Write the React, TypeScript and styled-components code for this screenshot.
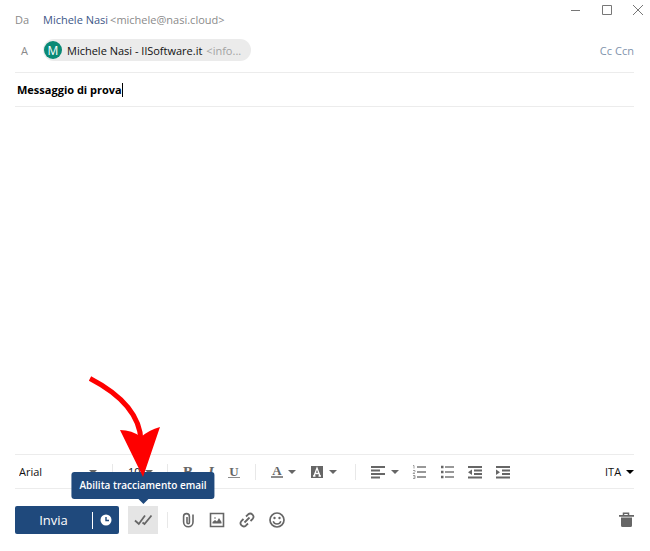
import React, { useState } from "react";
import styled, { createGlobalStyle, css } from "styled-components";

const UI = `"Open Sans", "Noto Sans", sans-serif`;
const NAVY = "#1f497c";
const ICON = "#666666";
const LINE = "#ececec";

const GlobalStyle = createGlobalStyle`
  * { box-sizing: border-box; }
  body { margin: 0; background: #fff; font-family: ${UI}; font-size: 11px; color: #111; }
  button, input, select, textarea { font: inherit; color: inherit; margin: 0; padding: 0; border: 0; background: none; outline: none; }
  button { cursor: pointer; }
  svg { display: block; }
`;

const Window = styled.main`
  display: flex;
  flex-direction: column;
  min-height: 100vh;
  padding: 0 16px 0 15px;
`;

const Header = styled.header`
  display: flex;
  flex-direction: column;
  padding-bottom: 11px;
  border-bottom: 1px solid ${LINE};
`;

const AddressRow = styled.div<{ $tall?: boolean }>`
  display: flex;
  align-items: center;
  height: ${(p) => (p.$tall ? 39 : 22)}px;
`;

const RowLabel = styled.span`
  width: 28px;
  padding-right: 15px;
  text-align: right;
  color: #8a8a8a;
`;

const Sender = styled.span`
  color: #3d5788;
`;

const Address = styled.span`
  margin-left: 2px;
  color: #8a8a8a;
`;

const WindowButtons = styled.div`
  display: flex;
  align-self: flex-start;
  gap: 19px;
  height: 20px;
  margin: 0 -10px 0 auto;
`;

const WindowButton = styled.button`
  display: grid;
  place-items: center;
  width: 12px;
`;

const Chip = styled.span`
  display: flex;
  align-items: center;
  height: 22px;
  padding: 0 10px 0 1px;
  border-radius: 11px;
  background: #ebebeb;
`;

const Avatar = styled.span`
  display: grid;
  place-items: center;
  width: 18px;
  height: 18px;
  margin-right: 5px;
  border-radius: 50%;
  background: #0a8a76;
  color: #fff;
  font-size: 12px;
`;

const ChipAddress = styled.span`
  margin-left: 4px;
  color: #a3a3a3;
`;

const CopyLinks = styled.nav`
  display: flex;
  gap: 3px;
  margin-left: auto;
`;

const CopyLink = styled.a`
  color: #7f93ac;
  text-decoration: none;
`;

const SubjectRow = styled.div`
  display: flex;
  align-items: center;
  height: 34px;
  padding-left: 2px;
  border-bottom: 1px solid ${LINE};
`;

const SubjectInput = styled.input`
  field-sizing: content;
  font-weight: 700;
  color: #000;
  caret-color: transparent;
`;

const TextCursor = styled.span`
  width: 1px;
  height: 14px;
  background: #000;
`;

const Message = styled.textarea`
  flex: 1;
  width: 100%;
  min-height: 120px;
  padding: 12px 2px;
  resize: none;
`;

const FormatBar = styled.div`
  display: flex;
  align-items: center;
  height: 35px;
  padding-left: 4px;
  border-top: 1px solid ${LINE};
  border-bottom: 1px solid ${LINE};
`;

const Divider = styled.span<{ $gap: number }>`
  flex: none;
  width: 1px;
  height: 16px;
  margin: 0 ${(p) => p.$gap}px;
  background: #e8e8e8;
`;

const SelectBox = styled.label<{ $width: number; $end?: boolean }>`
  display: grid;
  align-items: center;
  flex: none;
  width: ${(p) => p.$width}px;
  ${(p) => p.$end && css`margin-left: auto;`}

  > * { grid-area: 1 / 1; }
  > svg { justify-self: end; pointer-events: none; }
`;

const Select = styled.select`
  appearance: none;
  width: 100%;
`;

const ToolGroup = styled.div<{ $gap: number; $padEnd?: number }>`
  display: flex;
  align-items: center;
  gap: ${(p) => p.$gap}px;
  padding-right: ${(p) => p.$padEnd ?? 0}px;
`;

const ToolButton = styled.button`
  display: flex;
  align-items: center;
  justify-content: center;
  gap: 5px;
  height: 20px;
  min-width: 12px;
`;

const Letter = styled.span<{ $italic?: boolean; $rule?: number }>`
  min-width: 12px;
  font-family: "Liberation Serif", "DejaVu Serif", serif;
  font-size: ${(p) => (p.$rule ? 13 : 15)}px;
  line-height: ${(p) => (p.$rule ? 11 : 14)}px;
  text-align: center;
  color: ${ICON};
  font-weight: 700;
  font-style: ${(p) => (p.$italic ? "italic" : "normal")};
  border-bottom: ${(p) => p.$rule ?? 0}px solid #8c8c8c;
`;

const ActionBar = styled.footer`
  display: flex;
  align-items: center;
  padding: 17px 0;
`;

const SendGroup = styled.div`
  display: flex;
  align-items: center;
  height: 28px;
  border-radius: 2px;
  background: ${NAVY};
  color: #fff;
`;

const SendButton = styled.button`
  width: 77px;
  height: 28px;
  font-size: 13px;
`;

const SendDivider = styled.span`
  width: 1px;
  height: 17px;
  background: #fff;
`;

const ScheduleButton = styled.button`
  display: grid;
  place-items: center;
  width: 26px;
  height: 28px;
`;

const TrackAnchor = styled.div`
  position: relative;
  margin-left: 9px;
`;

const TrackButton = styled.button`
  display: grid;
  place-items: center;
  width: 30px;
  height: 28px;
  background: #e5e5e5;
`;

const Tooltip = styled.span`
  position: absolute;
  bottom: calc(100% + 7px);
  left: 50%;
  transform: translateX(-50%);
  padding: 6px 8px;
  border-radius: 3px;
  background: ${NAVY};
  color: #fff;
  font-size: 10px;
  font-weight: 600;
  line-height: 15px;
  white-space: nowrap;

  &::after {
    content: "";
    position: absolute;
    top: 100%;
    left: 50%;
    margin-left: -5px;
    border: 5px solid transparent;
    border-top-color: ${NAVY};
    border-bottom: 0;
  }
`;

const Pointer = styled.svg`
  position: absolute;
  right: -4px;
  bottom: calc(100% + 28px);
  pointer-events: none;
`;

const Attachments = styled.div`
  display: flex;
  align-items: center;
  gap: 14px;
  padding-left: 2px;
`;

const IconButton = styled.button<{ $end?: boolean }>`
  display: grid;
  place-items: center;
  width: 16px;
  height: 20px;
  ${(p) => p.$end && css`margin-left: auto;`}
`;

const Caret = ({ color = ICON }: { color?: string }) => (
  <svg width="8" height="4" viewBox="0 0 8 4"><path d="M0 0h8L4 4z" fill={color} /></svg>
);

const Lines = ({ d, children }: { d: string; children?: React.ReactNode }) => (
  <svg width="15" height="14" viewBox="0 0 15 14">
    <path d={d} stroke={ICON} strokeWidth="1.8" fill="none" />
    {children}
  </svg>
);

export default function App() {
  const [subject, setSubject] = useState("Messaggio di prova");
  return (
    <>
      <GlobalStyle />
      <Window>
        <Header>
          <AddressRow $tall>
            <RowLabel>Da</RowLabel>
            <Sender>Michele Nasi</Sender>
            <Address>&lt;michele@nasi.cloud&gt;</Address>
            <WindowButtons>
              <WindowButton aria-label="Riduci a icona">
                <svg width="12" height="12"><path d="M1 6.5h9" stroke="#777" /></svg>
              </WindowButton>
              <WindowButton aria-label="Ingrandisci">
                <svg width="12" height="12"><path d="M1.5 1.5h9v9h-9z" fill="none" stroke="#777" /></svg>
              </WindowButton>
              <WindowButton aria-label="Chiudi">
                <svg width="12" height="12"><path d="M1 1l10 10M11 1L1 11" stroke="#777" /></svg>
              </WindowButton>
            </WindowButtons>
          </AddressRow>
          <AddressRow>
            <RowLabel>A</RowLabel>
            <Chip>
              <Avatar>M</Avatar>
              <span>Michele Nasi - IlSoftware.it</span>
              <ChipAddress>&lt;info...</ChipAddress>
            </Chip>
            <CopyLinks>
              <CopyLink href="#cc">Cc</CopyLink>
              <CopyLink href="#ccn">Ccn</CopyLink>
            </CopyLinks>
          </AddressRow>
        </Header>

        <SubjectRow>
          <SubjectInput aria-label="Oggetto" value={subject} onChange={(e) => setSubject(e.target.value)} />
          <TextCursor />
        </SubjectRow>

        <Message aria-label="Messaggio" />

        <FormatBar>
          <SelectBox $width={78}>
            <Select aria-label="Carattere"><option>Arial</option></Select>
            <Caret />
          </SelectBox>
          <Divider $gap={15} />
          <SelectBox $width={25}>
            <Select aria-label="Dimensione"><option>10</option></Select>
            <Caret />
          </SelectBox>
          <Divider $gap={14} />
          <ToolGroup $gap={11}>
            <ToolButton aria-label="Grassetto"><Letter>B</Letter></ToolButton>
            <ToolButton aria-label="Corsivo"><Letter $italic>I</Letter></ToolButton>
            <ToolButton aria-label="Sottolineato"><Letter $rule={1}>U</Letter></ToolButton>
          </ToolGroup>
          <Divider $gap={15} />
          <ToolGroup $gap={14} $padEnd={3}>
            <ToolButton aria-label="Colore testo"><Letter $rule={2}>A</Letter><Caret /></ToolButton>
            <ToolButton aria-label="Colore sfondo">
              <svg width="14" height="14" viewBox="0 0 14 14">
                <path d="M1 1h12v12H1z" fill={ICON} />
                <path d="M4 11L7 3l3 8M5 8.5h4M3 11h2.5M8.5 11H11" fill="none" stroke="#fff" strokeWidth="1.3" />
              </svg>
              <Caret />
            </ToolButton>
          </ToolGroup>
          <Divider $gap={15} />
          <ToolGroup $gap={13}>
            <ToolButton aria-label="Allineamento">
              <Lines d="M0 2h14M0 5.5h9M0 9h14M0 12.5h9" />
              <Caret />
            </ToolButton>
            <ToolButton aria-label="Elenco numerato">
              <svg width="15" height="14" viewBox="0 0 15 14">
                <path d="M5 2h9M5 7h9M5 12h9" stroke="#777" strokeWidth="1.5" />
                <path d="M1 .5h1v3M1 5.5h2v1L1 8.5h2M1 10.5h2v3H1M1.5 12H3" fill="none" stroke="#888" strokeWidth=".8" />
              </svg>
            </ToolButton>
            <ToolButton aria-label="Elenco puntato">
              <svg width="15" height="14" viewBox="0 0 15 14">
                <path d="M5 2h9M5 7h9M5 12h9" stroke="#777" strokeWidth="1.5" />
                <path d="M1 .8h2.500v2.500H1zM1 5.800h2.500v2.500H1zM1 10.800h2.500v2.500H1z" fill={ICON} />
              </svg>
            </ToolButton>
            <ToolButton aria-label="Riduci rientro">
              <Lines d="M0 2h14M6 5.5h8M6 9h8M0 12.5h14"><path d="M4 4.500v5.500L0 7.200z" fill={ICON} /></Lines>
            </ToolButton>
            <ToolButton aria-label="Aumenta rientro">
              <Lines d="M0 2h14M6 5.5h8M6 9h8M0 12.5h14"><path d="M0 4.500v5.500l4-2.800z" fill={ICON} /></Lines>
            </ToolButton>
          </ToolGroup>
          <SelectBox $width={29} $end>
            <Select aria-label="Lingua"><option>ITA</option></Select>
            <Caret color="#000" />
          </SelectBox>
        </FormatBar>

        <ActionBar>
          <SendGroup>
            <SendButton>Invia</SendButton>
            <SendDivider />
            <ScheduleButton aria-label="Invia più tardi">
              <svg width="12" height="12" viewBox="0 0 12 12">
                <circle cx="6" cy="6" r="5.500" fill="#fff" />
                <path d="M6 3v3.500h3" fill="none" stroke={NAVY} strokeWidth="1.4" />
              </svg>
            </ScheduleButton>
          </SendGroup>
          <TrackAnchor>
            <TrackButton aria-label="Abilita tracciamento email" aria-describedby="track-tip">
              <svg width="19" height="12" viewBox="0 0 19 12" fill="none" stroke={ICON} strokeWidth="1.800">
                <path d="M1 6.500l3.800 3.500L11 1.500M8.500 8.500l2 1.500L17.500 1.500" />
              </svg>
            </TrackButton>
            <Tooltip id="track-tip" role="tooltip">Abilita tracciamento email</Tooltip>
            <Pointer width="74" height="103" viewBox="0 0 74 103">
              <path d="M2 3.500C28 17 52 36 53 66" fill="none" stroke="#fe0000" strokeWidth="5" />
              <path d="M55 102L32 55q12 0 21 7 8-7 19-10z" fill="#fe0000" />
            </Pointer>
          </TrackAnchor>
          <Divider $gap={9} />
          <Attachments>
            <IconButton aria-label="Allega file">
              <svg width="16" height="16" viewBox="0 0 16 16" fill="none" stroke={ICON} strokeWidth="1.600">
                <path d="M14 2.500v7.500a4.700 4.700 0 0 1-9.400 0V4.500a2.900 2.900 0 0 1 5.800 0v6a1.200 1.200 0 0 1-2.400 0V5" />
              </svg>
            </IconButton>
            <IconButton aria-label="Inserisci immagine">
              <svg width="16" height="16" viewBox="0 0 16 16">
                <path d="M1.500 1.500h13v13h-13z" fill="none" stroke={ICON} strokeWidth="1.600" />
                <path d="M3.500 11.500V10L6 8l2 1.500 2-3.500 2.500 4v1.500z" fill={ICON} />
                <circle cx="6" cy="6" r=".8" fill={ICON} />
              </svg>
            </IconButton>
            <IconButton aria-label="Inserisci link">
              <svg width="16" height="16" viewBox="0 0 16 16" fill="none" stroke={ICON} strokeWidth="1.800">
                <path d="M5.500 10.500l5-5M7 4.500l2.200-2.200a3.200 3.200 0 0 1 4.500 4.500L11.500 9M4.500 7L2.300 9.200a3.200 3.200 0 0 0 4.500 4.500L9 11.500" />
              </svg>
            </IconButton>
            <IconButton aria-label="Inserisci emoji">
              <svg width="16" height="16" viewBox="0 0 16 16">
                <circle cx="8" cy="8" r="7" fill="none" stroke={ICON} strokeWidth="1.700" />
                <circle cx="5.500" cy="6" r="1.200" fill={ICON} />
                <circle cx="10.500" cy="6" r="1.200" fill={ICON} />
                <path d="M4.200 9.200a4 4 0 0 0 7.600 0" fill="none" stroke={ICON} strokeWidth="1.500" />
              </svg>
            </IconButton>
          </Attachments>
          <IconButton $end aria-label="Elimina">
            <svg width="16" height="16" viewBox="0 0 16 16">
              <path d="M5.500 3.500V1.300h5v2.200" fill="none" stroke={ICON} strokeWidth="1.500" />
              <path d="M1 3h15v1.800H1zM3 5.500h11V13.500q0 1.500-1.500 1.500H4.500Q3 15 3 13.500z" fill={ICON} />
            </svg>
          </IconButton>
        </ActionBar>
      </Window>
    </>
  );
}
